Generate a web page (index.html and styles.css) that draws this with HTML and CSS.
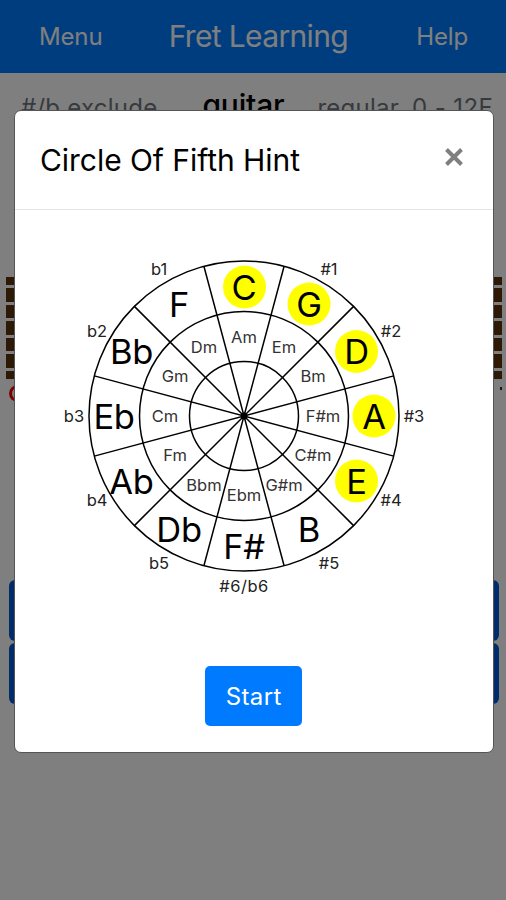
FILE: index.html
```
<!DOCTYPE html>
<html lang="en">
<head>
    <meta charset="UTF-8">
    <meta name="viewport" content="width=device-width, initial-scale=1.0">
    <title>Fret Learning</title>
    <link rel="stylesheet" href="styles.css">
</head>
<body>

    <nav class="navbar">
        <span class="nav-link">Menu</span>
        <span class="nav-title">Fret Learning</span>
        <span class="nav-link">Help</span>
    </nav>

    <div class="settings">
        <span class="exclude">#/b exclude</span>
        <span class="instrument">guitar</span>
        <span class="tuning">regular</span>
        <span class="range">0 - 12F</span>
    </div>

    <!-- Fretboard -->
    <div class="fretboard">
        <div class="wood edge"></div>
        <div class="wood"></div>
        <div class="wood"></div>
        <div class="wood"></div>
        <div class="wood"></div>
        <div class="wood"></div>
        <div class="wood edge"></div>
    </div>
    <div class="fret-marks">
        <span class="open-mark"></span>
        <span class="end-mark"></span>
    </div>

    <div class="actions">
        <div class="action"></div>
        <div class="action"></div>
    </div>

    <!-- Hint modal -->
    <div class="backdrop">
        <div class="modal">
            <div class="modal-header">
                <h5 class="modal-title">Circle Of Fifth Hint</h5>
                <button class="close" aria-label="Close">
                    <svg width="18" height="18" viewBox="0 0 18 18"><path d="M1.5 1.5 16.5 16.5M16.5 1.5 1.5 16.5"/></svg>
                </button>
            </div>
            <div class="modal-body">
                <svg class="circle" width="380" height="350" viewBox="-190 -175 380 350">
                    <g class="marked">
                        <circle cx="0.5" cy="-129" r="21.5"/>
                        <circle cx="65" cy="-112" r="21.5"/>
                        <circle cx="112.5" cy="-64.5" r="21.5"/>
                        <circle cx="130" cy="0" r="21.5"/>
                        <circle cx="112.5" cy="65" r="21.5"/>
                    </g>
                    <g class="lines">
                        <circle r="155"/>
                        <circle r="104.5"/>
                        <circle r="54.5"/>
                        <path d="M-40.1-149.7 40.1 149.7M40.1-149.7-40.1 149.7M-109.6-109.6 109.6 109.6M109.6-109.6-109.6 109.6M-149.7-40.1 149.7 40.1M149.7-40.1-149.7 40.1"/>
                    </g>
                    <circle r="3.5"/>
                    <g class="major">
                        <text x="0" y="-116.5">C</text>
                        <text x="65" y="-99.5">G</text>
                        <text x="112.5" y="-52">D</text>
                        <text x="130" y="13">A</text>
                        <text x="112.5" y="77.5">E</text>
                        <text x="65" y="125.5">B</text>
                        <text x="0" y="142.5">F#</text>
                        <text x="-65" y="125.5">Db</text>
                        <text x="-112.5" y="77.5">Ab</text>
                        <text x="-130" y="13">Eb</text>
                        <text x="-112.5" y="-52">Bb</text>
                        <text x="-65" y="-99.5">F</text>
                    </g>
                    <g class="minor">
                        <text x="0" y="-73.5">Am</text>
                        <text x="40" y="-63">Em</text>
                        <text x="69" y="-34">Bm</text>
                        <text x="79" y="6">F#m</text>
                        <text x="69" y="45">C#m</text>
                        <text x="40" y="74.5">G#m</text>
                        <text x="0" y="85">Ebm</text>
                        <text x="-40" y="74.5">Bbm</text>
                        <text x="-69" y="45">Fm</text>
                        <text x="-79" y="6">Cm</text>
                        <text x="-69" y="-34">Gm</text>
                        <text x="-40" y="-63">Dm</text>
                    </g>
                    <g class="signature">
                        <text x="85" y="-141">#1</text>
                        <text x="147" y="-79">#2</text>
                        <text x="170" y="6">#3</text>
                        <text x="147" y="90">#4</text>
                        <text x="85" y="152.5">#5</text>
                        <text class="wide" x="0" y="175.5">#6/b6</text>
                        <text x="-85" y="152.5">b5</text>
                        <text x="-147" y="90">b4</text>
                        <text x="-170" y="6">b3</text>
                        <text x="-147" y="-79">b2</text>
                        <text x="-85" y="-141">b1</text>
                    </g>
                </svg>
                <button class="start">Start</button>
            </div>
        </div>
    </div>

</body>
</html>
```
FILE: styles.css
```
* { box-sizing: border-box; }
body { margin: 0; height: 900px; overflow: hidden; background: #fff; color: #000; font-family: Inter, "Liberation Sans", sans-serif; }
h5, button { margin: 0; font-family: inherit; font-weight: 400; }

.navbar { display: flex; align-items: center; justify-content: space-between; height: 72.5px; padding: 0 38px 0 39px; background: #007bff; color: #fff; }
.nav-link { font-size: 24px; letter-spacing: -0.15px; }
.nav-title { margin-right: 2px; font-size: 30px; letter-spacing: -0.65px; }

.settings { display: flex; align-items: baseline; height: 47.5px; padding: 14px 0 0 21px; white-space: nowrap; color: #6c757d; font-size: 24px; letter-spacing: 0.25px; }
.instrument { margin-left: 45px; color: #000; font-size: 30px; font-weight: 500; letter-spacing: -0.2px; }
.tuning { margin-left: 33px; }
.range { margin-left: 13px; letter-spacing: 0.4px; }

.fretboard { display: flex; flex-direction: column; gap: 3px; margin: 157px 4px 0 6px; }
.wood { height: 13.6px; background: #5c300c; }
.wood.edge { height: 8px; }
.fret-marks { display: flex; justify-content: space-between; height: 24px; padding: 6px 4px 0 9px; }
.open-mark { width: 17px; height: 17px; border: 3px solid #f00; border-radius: 50%; }
.end-mark { width: 2px; height: 3px; margin-top: 2px; background: #333; }

.actions { display: flex; flex-direction: column; gap: 2px; margin: 177px 7px 0 9px; }
.action { height: 61px; border-radius: 6px; background: #0058d8; }

.backdrop { position: fixed; inset: 0; padding: 109.5px 12.5px 0 14px; background: rgba(0, 0, 0, 0.5); }
.modal { height: 643.5px; border: 1px solid #555; border-radius: 7px; background: #fff; }
.modal-header { display: flex; align-items: center; justify-content: space-between; height: 99px; padding: 0 29.5px 0 25px; border-bottom: 1px solid #e3e6e9; }
.modal-title { font-size: 30px; letter-spacing: -0.05px; }
.close { display: flex; padding: 0 0 6px; border: 0; background: none; }
.close path { fill: none; stroke: #7f7f7f; stroke-width: 4; }
.modal-body { display: flex; flex-direction: column; align-items: center; padding-top: 31.5px; }

.circle { overflow: visible; margin-right: 19px; }
.circle text { text-anchor: middle; }
.marked { fill: #ff0; }
.lines { fill: none; stroke: #000; stroke-width: 1.5; }
.major { font-size: 34.5px; letter-spacing: -0.3px; }
.minor { font-size: 16.5px; fill: #333; }
.signature { font-size: 16.5px; fill: #222; }
.wide { letter-spacing: 0.5px; }

.start { width: 97px; height: 60px; margin-top: 75px; border: 0; border-radius: 5px; background: #007bff; color: #fff; font-size: 24px; letter-spacing: 0.4px; }
```
